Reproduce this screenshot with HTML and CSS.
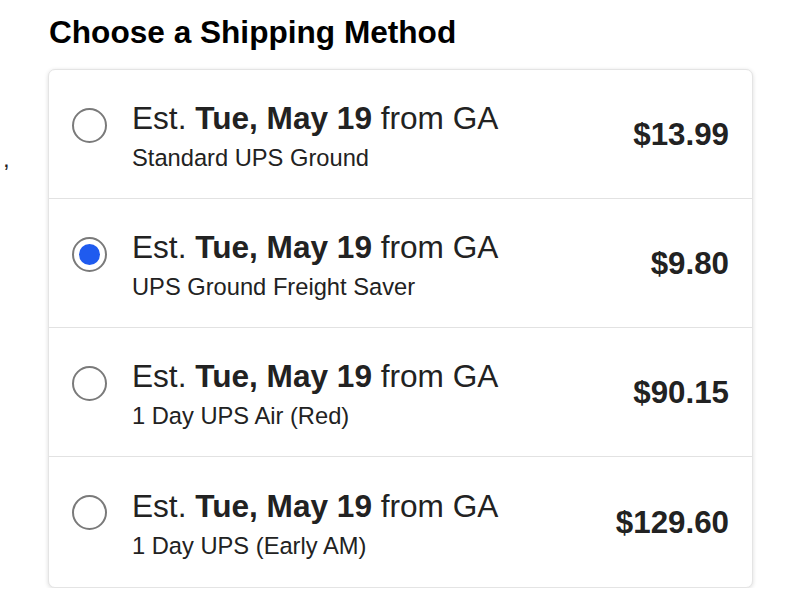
FILE: index.html
```html
<!DOCTYPE html>
<html lang="en">
<head>
<meta charset="utf-8">
<title>Choose a Shipping Method</title>
<link rel="stylesheet" href="styles.css">
</head>
<body>
<div class="page">
  <div class="aside"><span class="comma">,</span></div>
  <div class="main">
    <h2 class="title">Choose a Shipping Method</h2>
    <div class="card">
      <label class="row">
        <span class="radio"></span>
        <span class="info">
          <span class="est">Est. <b>Tue, May 19</b> from GA</span>
          <span class="method">Standard UPS Ground</span>
        </span>
        <span class="price">$13.99</span>
      </label>
      <label class="row">
        <span class="radio checked"><span class="dot"></span></span>
        <span class="info">
          <span class="est">Est. <b>Tue, May 19</b> from GA</span>
          <span class="method">UPS Ground Freight Saver</span>
        </span>
        <span class="price">$9.80</span>
      </label>
      <label class="row">
        <span class="radio"></span>
        <span class="info">
          <span class="est">Est. <b>Tue, May 19</b> from GA</span>
          <span class="method">1 Day UPS Air (Red)</span>
        </span>
        <span class="price">$90.15</span>
      </label>
      <label class="row">
        <span class="radio"></span>
        <span class="info">
          <span class="est">Est. <b>Tue, May 19</b> from GA</span>
          <span class="method">1 Day UPS (Early AM)</span>
        </span>
        <span class="price">$129.60</span>
      </label>
    </div>
  </div>
</div>
</body>
</html>
```

FILE: styles.css
```css
* { box-sizing: border-box; }

html, body {
  margin: 0;
  padding: 0;
  background: #ffffff;
}

body {
  font-family: "Liberation Sans", Arial, sans-serif;
  color: #222222;
}

.page {
  display: flex;
  width: 800px;
}

.aside {
  width: 48px;
  padding-top: 147px;
  padding-left: 3px;
}

.comma {
  display: block;
  font-size: 24px;
  line-height: 24px;
  color: #222;
}

.main {
  display: flex;
  flex-direction: column;
  width: 705px;
  padding-top: 14px;
}

.title {
  margin: 0 0 19px 1px;
  font-size: 31.6px;
  line-height: 36px;
  font-weight: bold;
  color: #000;
}

.card {
  border: 1px solid #e4e4e4;
  border-radius: 7px;
  background: #fff;
  box-shadow: 0 1px 4px rgba(0, 0, 0, 0.14);
  overflow: hidden;
}

.row {
  display: flex;
  align-items: center;
  height: 129px;
  padding: 0 23px 2px 23px;
  border-bottom: 1px solid #e2e2e2;
}

.row:last-child {
  border-bottom: none;
  height: 130px;
}

.radio {
  flex: none;
  align-self: flex-start;
  margin-top: 38px;
  margin-right: 25px;
  width: 35px;
  height: 35px;
  border: 2px solid #7a7a7a;
  border-radius: 50%;
  display: flex;
  align-items: center;
  justify-content: center;
}

.dot {
  width: 21px;
  height: 21px;
  border-radius: 50%;
  background: #1f5bef;
}

.info {
  flex: 1;
  display: flex;
  flex-direction: column;
  margin-top: 6px;
}

.est {
  font-size: 31.6px;
  line-height: 40px;
  white-space: nowrap;
}

.est b {
  font-weight: bold;
}

.method {
  margin-top: 3px;
  font-size: 23.7px;
  line-height: 34px;
  white-space: nowrap;
}

.price {
  flex: none;
  font-size: 31.3px;
  line-height: 36px;
  font-weight: bold;
  padding-top: 3px;
}
```
